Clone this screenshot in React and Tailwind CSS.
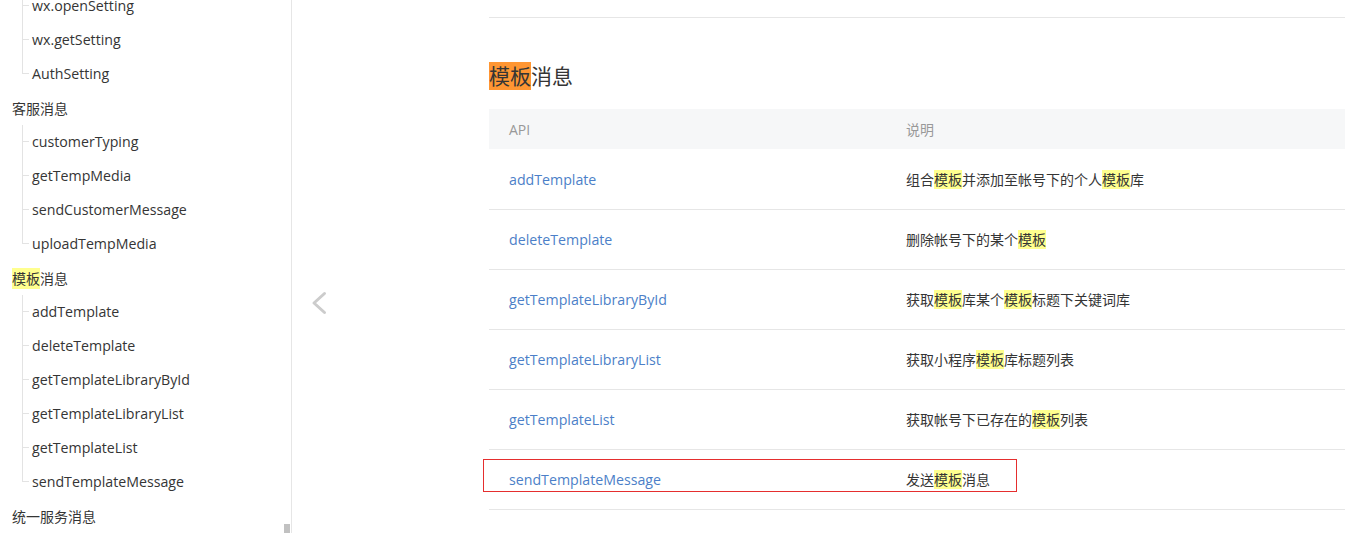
import React from 'react';

const FONT = { fontFamily: '"Open Sans", "Noto Sans CJK SC", sans-serif' };

const Hl = ({ children }) => <span className="bg-[#ffff8f]">{children}</span>;

// sidebar tree: header rows and child rows
const tree = [
  { children: ['wx.openSetting', 'wx.getSetting', 'AuthSetting'], noHeader: true },
  { title: '客服消息', children: ['customerTyping', 'getTempMedia', 'sendCustomerMessage', 'uploadTempMedia'] },
  {
    title: <><Hl>模板</Hl>消息</>,
    children: ['addTemplate', 'deleteTemplate', 'getTemplateLibraryById', 'getTemplateLibraryList', 'getTemplateList', 'sendTemplateMessage'],
  },
  { title: '统一服务消息', children: [''] },
];

const ChildRow = ({ label, last }) => (
  <div className="flex h-[34px] items-center">
    <div className="ml-[22px] flex h-full w-[7px] flex-col">
      <div className="h-1/2 border-b border-l border-[#e3e3e3]" />
      <div className={`h-1/2 ${last ? '' : 'border-l border-[#e3e3e3]'}`} />
    </div>
    {label && <span className="ml-[3px] text-[14.2px] text-[#353535]">{label}</span>}
  </div>
);

const Sidebar = () => (
  <div className="relative h-full w-[292px] shrink-0 overflow-hidden border-r border-[#e6e6e6]">
    <div className="-mt-[11px]">
      {tree.map((g, gi) => (
        <div key={gi}>
          {!g.noHeader && (
            <div className="flex h-[34px] items-center pl-[12px] text-[14px] text-[#353535]">{g.title}</div>
          )}
          {g.children.map((c, i) => (
            <ChildRow key={gi + '-' + i} label={c} last={i === g.children.length - 1} />
          ))}
        </div>
      ))}
    </div>
    <div className="absolute bottom-0 right-[1px] h-[9px] w-[6px] bg-[#c1c1c1]" />
  </div>
);

const rows = [
  ['addTemplate', <>组合<Hl>模板</Hl>并添加至帐号下的个人<Hl>模板</Hl>库</>],
  ['deleteTemplate', <>删除帐号下的某个<Hl>模板</Hl></>],
  ['getTemplateLibraryById', <>获取<Hl>模板</Hl>库某个<Hl>模板</Hl>标题下关键词库</>],
  ['getTemplateLibraryList', <>获取小程序<Hl>模板</Hl>库标题列表</>],
  ['getTemplateList', <>获取帐号下已存在的<Hl>模板</Hl>列表</>],
  ['sendTemplateMessage', <>发送<Hl>模板</Hl>消息</>],
];

export default function App() {
  return (
    <div className="flex h-[533px] w-[1345px] overflow-hidden bg-white" style={FONT}>
      <Sidebar />

      {/* pager arrow */}
      <div className="w-[197px] shrink-0 pl-[19px] pt-[291px]">
        <svg width="16" height="24" viewBox="0 0 16 24" fill="none">
          <polyline points="13.5,2.5 3,12 13.5,21.5" stroke="#cccccc" strokeWidth="3" strokeLinecap="round" strokeLinejoin="round" />
        </svg>
      </div>

      <div className="relative min-w-0 flex-1">
        <div className="h-[18px] border-b border-[#e6e6e6]" />
        <h2 className="mt-[42px] text-[21px] leading-[32px] text-[#353535]">
          <span className="bg-[#ff9632]">模板</span>消息
        </h2>
        <div className="mt-[17px]">
          <div className="grid h-[40px] grid-cols-[397px_1fr] items-center bg-[#f6f7f8] text-[14px] text-[#999]">
            <div className="pl-[20px]">API</div>
            <div className="pl-[20px]">说明</div>
          </div>
          <div className="pt-[1px]">
            {rows.map(([api, desc]) => (
              <div key={api} className="grid h-[60px] grid-cols-[397px_1fr] items-center border-b border-[#e6e6e6] text-[14px]">
                <div className="pl-[20px] text-[14.2px] text-[#4c7fc8]">{api}</div>
                <div className="pl-[20px] text-[#353535]">{desc}</div>
              </div>
            ))}
          </div>
        </div>
        {/* annotation box */}
        <div className="absolute left-[-6px] top-[459px] h-[33px] w-[534px] border border-[#e52e2e]" />
      </div>
    </div>
  );
}
